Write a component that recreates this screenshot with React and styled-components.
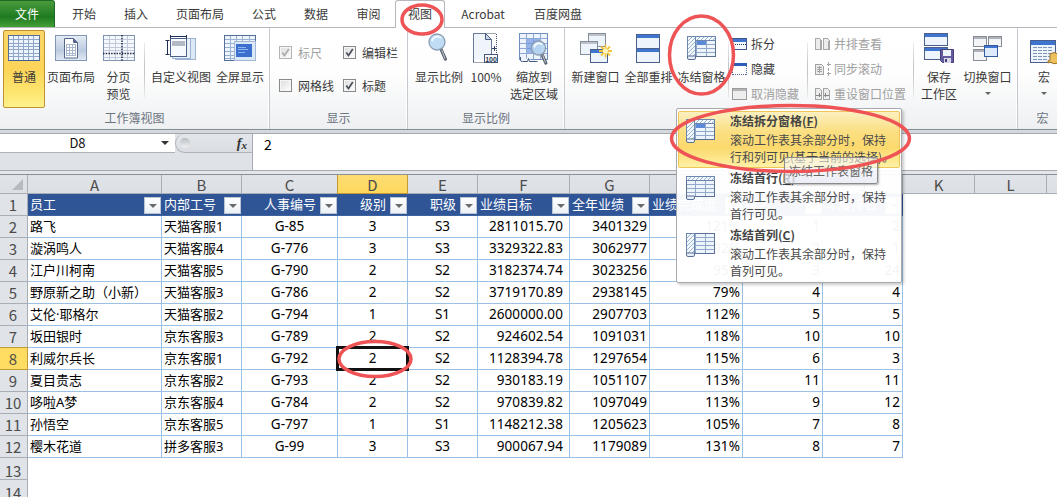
import React from "react";
import styled, { createGlobalStyle, css } from "styled-components";

const Global = createGlobalStyle`
  * { box-sizing: border-box; }
  html, body { margin: 0; background: #fff; overflow: hidden; }
  body { font-family: "Noto Sans CJK SC", "Noto Sans", sans-serif; font-size: 12px; color: #3a3a3a; }
`;

const Window = styled.div`
  position: relative;
  width: 1057px;
  height: 497px;
  overflow: hidden;
  display: flex;
  flex-direction: column;
  background: #fff;
  white-space: nowrap;
`;

/* ---------- tabs ---------- */
const TabBar = styled.div`
  display: flex;
  height: 28px;
  flex: none;
  border-bottom: 1px solid #b4b8bd;
`;
const FileTab = styled.div`
  width: 55px;
  height: 27px;
  margin-right: 3px;
  border-radius: 0 3px 0 0;
  border: 1px solid #1d6b22;
  border-left: none;
  border-bottom: none;
  background: linear-gradient(#4a9a3c, #2c8429 45%, #1f7a20 60%, #43a037);
  color: #fff;
  line-height: 25px;
  text-align: center;
`;
const Tab = styled.div`
  width: ${(p) => p.$w}px;
  height: 28px;
  line-height: 27px;
  text-align: center;
  ${(p) =>
    p.$active &&
    css`
      background: #fff;
      border: 1px solid #b4b8bd;
      border-bottom: none;
      border-radius: 3px 3px 0 0;
      line-height: 25px;
    `}
`;

/* ---------- ribbon ---------- */
const Ribbon = styled.div`
  display: flex;
  flex: none;
  height: 106px;
  border-bottom: 1px solid #a3a8af;
  background: linear-gradient(#fff 0, #fefefe 45px, #eef0f2 100px, #e8eaed 101px, #868c94 101px, #868c94 102px, #d5d9de 102px);
`;
const Group = styled.div`
  width: ${(p) => p.$w}px;
  height: 101px;
  flex: none;
  display: flex;
  flex-direction: column;
  border-right: 1px solid #c6cad0;
  box-shadow: inset -1px 0 #fff;
`;
const GroupBody = styled.div`
  display: flex;
  height: 80px;
  padding-left: ${(p) => p.$pl || 0}px;
`;
const GroupLabel = styled.div`
  height: 20px;
  line-height: 20px;
  text-align: center;
  color: #6c7480;
`;
const BigButton = styled.div`
  width: ${(p) => p.$w}px;
  height: 78px;
  margin-top: 2px;
  flex: none;
  display: flex;
  flex-direction: column;
  align-items: center;
  border-radius: 2px;
  border: 1px solid ${(p) => (p.$on ? "#bf922f" : "transparent")};
  background: ${(p) => (p.$on ? "linear-gradient(#fbd668, #fdd459 50%, #fee56f 80%, #fff08e)" : "none")};
`;
const IconBox = styled.div`
  height: 37px;
  flex: none;
  display: flex;
  align-items: flex-start;
`;
const BigText = styled.div`
  line-height: 17px;
  text-align: center;
`;
const DropArrow = styled.div`
  width: 0;
  height: 0;
  margin-top: 7px;
  border: 3px solid transparent;
  border-top-color: #666;
  border-bottom: none;
`;
const Divider = styled.div`
  width: 1px;
  height: 56px;
  margin: 14px ${(p) => p.$mr || 0}px 0 ${(p) => p.$ml || 0}px;
  flex: none;
  background: linear-gradient(#eee, #c3c7cc 40%, #c3c7cc 60%, #eee);
`;
const CheckGrid = styled.div`
  display: grid;
  grid-template-columns: 64px 66px;
  grid-template-rows: 33px 33px;
  padding: 8px 0 0 9px;
`;
const CheckLabel = styled.div`
  display: flex;
  align-items: center;
  gap: 6px;
  color: ${(p) => (p.$off ? "#a0a0a0" : "#3a3a3a")};
`;
const CheckBox = styled.div`
  width: 13px;
  height: 13px;
  border: 1px solid ${(p) => (p.$off ? "#b5b5b5" : "#8a8a8a")};
  background: linear-gradient(135deg, #dcdcdc, #fff);
  box-shadow: inset 0 0 0 1px #f6f6f6;
  svg { display: block; }
`;
const SmallStack = styled.div`
  width: ${(p) => p.$w}px;
  flex: none;
  display: flex;
  flex-direction: column;
  padding-top: 3px;
`;
const SmallButton = styled.div`
  height: 25px;
  display: flex;
  align-items: center;
  gap: 3px;
  color: ${(p) => (p.$off ? "#a0a0a0" : "#3a3a3a")};
`;

/* ---------- formula bar ---------- */
const FormulaBar = styled.div`
  display: flex;
  flex: none;
  height: 37px;
  background: #dfe2e7;
  border-bottom: 1px solid #a5aab2;
`;
const NameBox = styled.div`
  width: 175px;
  height: 19px;
  background: #fff;
  border-bottom: 1px solid #b0b4ba;
  display: flex;
  align-items: center;
  font: 13px/18px "Noto Sans CJK SC", sans-serif;
  color: #111;
`;
const NameText = styled.div`
  width: 155px;
  text-align: center;
`;
const NameArrow = styled.div`
  margin-left: 6px;
  border: 4px solid transparent;
  border-top-color: #333;
  border-bottom: none;
`;
const FxZone = styled.div`
  width: 77px;
  height: 19px;
  background: linear-gradient(#e3e6ea, #dadee3);
  border: 1px solid #b0b4ba;
  border-top: none;
  border-right: none;
  border-radius: 10px 0 0 10px;
  display: flex;
  align-items: center;
  justify-content: space-between;
  padding: 0 5px 0 4px;
`;
const Knob = styled.div`
  width: 10px;
  height: 10px;
  border-radius: 50%;
  background: linear-gradient(#b9bdc3, #f2f2f2);
`;
const Fx = styled.div`
  font: italic bold 14px/17px "Liberation Serif", serif;
  color: #333;
  sub { font-size: 11px; vertical-align: -1px; line-height: 0; }
`;
const FormulaInput = styled.div`
  flex: 1;
  height: 36px;
  background: #fff;
  border-left: 1px solid #a5aab2;
  padding-left: 11px;
  font: 14px/20px "Noto Sans CJK SC", sans-serif;
  color: #000;
`;

/* ---------- sheet ---------- */
const Sheet = styled.div`
  display: grid;
  flex: none;
  margin-top: 3px;
  border-top: 1px solid #8b9098;
  grid-template-columns: 28px 134px 80px 96px 70px 70px 92px 80px 93px 80px 80px 72px 72px 72px;
  grid-template-rows: 19px;
  grid-auto-rows: 22px;
`;
const SheetBack = styled.div`
  background: #e4e6ea;
  flex: none;
`;
const HeadCell = styled.div`
  background: ${(p) => (p.$on ? "linear-gradient(#fddc73, #ffd85c)" : "linear-gradient(#e0e3e7, #dcdfe4)")};
  border-right: 1px solid ${(p) => (p.$on ? "#c39a35" : "#a9aeb6")};
  border-bottom: 1px solid ${(p) => (p.$on ? "#c39a35" : "#a9aeb6")};
  box-shadow: ${(p) => (p.$on ? "-1px 0 #c39a35" : "none")};
  font-size: 15px;
  line-height: 19px;
  color: #4c4c4c;
  text-align: center;
`;
const RowHead = styled(HeadCell)`
  background: ${(p) => (p.$on ? "#ffdc62" : "#e0e3e8")};
  line-height: ${(p) => (p.$low ? 25 : 22)}px;
  padding-right: 1px;
  box-shadow: ${(p) => (p.$on ? "0 -1px #c39a35" : "none")};
  overflow: hidden;
`;
const Corner = styled(HeadCell)`
  display: flex;
  justify-content: flex-end;
  align-items: flex-end;
  padding: 0 4px 3px 0;
`;
const Cell = styled.div`
  background: #fff;
  border-right: 1px solid #9bc2e6;
  border-bottom: 1px solid #9bc2e6;
  color: #000;
  font-family: "Noto Sans", "Noto Sans CJK SC", sans-serif;
  font-size: ${(p) => p.$size}px;
  letter-spacing: ${(p) => p.$ls || 0}px;
  line-height: 21px;
  text-align: ${(p) => p.$align};
  padding: 0 ${(p) => p.$pr}px 0 ${(p) => p.$pl}px;
`;
const Blank = styled.div`
  background: #fff;
  grid-column: ${(p) => p.$from} / 15;
`;
const TitleCell = styled.div`
  position: relative;
  background: #2f5597;
  border-bottom: 1px solid #3d649f;
  color: #fff;
  font-size: 13px;
  line-height: 20px;
  text-align: ${(p) => p.$align};
  padding-left: ${(p) => (p.$align === "left" ? 2 : 0)}px;
`;
const Filter = styled.div`
  position: absolute;
  right: 1px;
  top: 3px;
  width: 17px;
  height: 17px;
  background: linear-gradient(#fff, #edf1f6);
  border: 1px solid #b9c5d5;
  display: flex;
  align-items: center;
  justify-content: center;
  &::after {
    content: "";
    border: 4px solid transparent;
    border-top: 4px solid #6b6b6b;
    border-bottom: none;
  }
`;

/* ---------- overlays ---------- */
const Selection = styled.div`
  position: absolute;
  left: 336px;
  top: 346px;
  width: 73px;
  height: 25px;
  border: 3px solid #111;
`;
const Menu = styled.div`
  position: absolute;
  left: 676px;
  top: 108px;
  width: 226px;
  height: 175px;
  padding: 2px 1px;
  border: 1px solid #a7abb0;
  border-radius: 2px;
  background: rgba(255, 255, 255, 0.955);
  box-shadow: 2px 2px 3px rgba(0, 0, 0, 0.2);
`;
const MenuItem = styled.div`
  display: flex;
  height: 57px;
  padding-left: 6px;
  border: 1px solid ${(p) => (p.$on ? "#f0c757" : "transparent")};
  border-radius: 2px;
  background: ${(p) => (p.$on ? "linear-gradient(#fcf0c0, #fbdf83 35%, #fcd96d 65%, #fff1a6)" : "none")};
`;
const MenuIcon = styled.div`
  width: 45px;
  padding-top: 6px;
  flex: none;
`;
const MenuTitle = styled.div`
  font-weight: bold;
  line-height: 17px;
  margin-bottom: 2px;
  color: #444;
`;
const MenuText = styled.div`
  line-height: 17px;
  color: #4a4a4a;
`;
const Tooltip = styled.div`
  position: absolute;
  left: 784px;
  top: 157px;
  width: 94px;
  height: 27px;
  border: 1px solid #8b8b8b;
  border-radius: 2px;
  background: linear-gradient(rgba(255, 255, 255, 0.55), rgba(232, 234, 244, 0.82));
  box-shadow: 1px 1px 2px rgba(0, 0, 0, 0.3);
  line-height: 25px;
  text-align: center;
  color: #666;
`;
const Marks = styled.svg`
  position: absolute;
  left: 0;
  top: 0;
  pointer-events: none;
`;

/* ---------- icons ---------- */
const Lines = ({ x, y, w, h, cols = [], rows = [], stroke = "#7f9cc4", fill = "#eef4fb", edge }) => (
  <g shapeRendering="crispEdges" fill="none" stroke={stroke}>
    <rect x={x + 0.5} y={y + 0.5} width={w - 1} height={h - 1} fill={fill} stroke={edge || stroke} />
    {cols.map((c) => <path key={"c" + c} d={`M${x + c + 0.5} ${y + 1}v${h - 2}`} />)}
    {rows.map((r) => <path key={"r" + r} d={`M${x + 1} ${y + r + 0.5}h${w - 2}`} />)}
  </g>
);
const Pane = ({ x, y, w, h, bar = "#3f74cf", edge = "#4a5f8c", fill = "#eef4fc", bh = 3 }) => (
  <g shapeRendering="crispEdges">
    <rect x={x + 0.5} y={y + 0.5} width={w - 1} height={h - 1} fill={fill} stroke={edge} />
    <rect x={x + 1} y={y + 1} width={w - 2} height={bh} fill={bar} />
  </g>
);
const Ico = ({ w = 34, h = 36, children }) => <svg width={w} height={h} viewBox={`0 0 ${w} ${h}`}>{children}</svg>;

const NormalIcon = () => (
  <Ico w={32}>
    <Lines x={0} y={4} w={32} h={26} cols={[5, 10, 15, 20, 25]} rows={[4, 8, 11, 14, 18, 21]} edge="#566f99" stroke="#8fa6c8" />
    <path d="M1 29.500h30" stroke="#3f5f92" />
  </Ico>
);
const LayoutIcon = () => (
  <Ico w={32}>
    <defs><linearGradient id="lg1" x2="0" y2="1"><stop stopColor="#e6ecf4" /><stop offset=".6" stopColor="#bccbe0" /><stop offset="1" stopColor="#e2eaf4" /></linearGradient></defs>
    <rect x=".5" y="4.500" width="31" height="25" fill="url(#lg1)" stroke="#8296b6" />
    <path d="M9.500 7.500h9l4 4v15.500h-13z" fill="#fff" stroke="#56698c" />
    <path d="M18.500 7.500v4h4z" fill="#56698c" stroke="#56698c" />
    <path d="M11.500 13.500h9M11.500 16.500h9M11.500 19.500h9M11.500 22.500h9M11.500 24.500h9M11.500 13v12M14.500 13v12M17.500 13v12M20.500 13v12" stroke="#a9b7cf" />
  </Ico>
);
const BreakIcon = () => (
  <Ico w={32}>
    <Lines x={0} y={4} w={32} h={26} cols={[6, 12, 24]} rows={[4, 8, 12, 15, 22]} edge="#8394b2" stroke="#c0c9d8" fill="#f4f7fb" />
    <path d="M19 4v26M0 22.500h32" stroke="#1d2c4a" strokeWidth="1.500" strokeDasharray="1.500 1.200" />
  </Ico>
);
const CustomIcon = () => (
  <Ico>
    <rect x="11.500" y="7.500" width="20" height="21" fill="#dce8f5" stroke="#9db4d3" />
    <rect x="8.500" y="7.500" width="18" height="20" fill="#e9f1fa" stroke="#9db4d3" />
    <rect x="6.500" y="7.500" width="16" height="18" fill="#f7faff" stroke="#4d628a" />
    <rect x="8" y="10" width="13" height="5" fill="#b3bac6" />
    <path d="M6.500 5.500h16M6.500 4v3.500M22.500 4v3.500M3.500 9.500v14M1.500 9.500h4M1.500 23.500h4" stroke="#1f2f52" />
  </Ico>
);
const FullIcon = () => (
  <Ico w={32}>
    <Lines x={0} y={4} w={32} h={26} cols={[6, 12, 18, 25]} rows={[4, 8, 12, 16, 20, 23]} edge="#566f99" stroke="#9ab1d3" />
    <rect x="10.500" y="10.500" width="21" height="19" fill="#dbe8f8" stroke="#a3b6d4" />
    <rect x="12" y="13" width="16" height="13" fill="#3d6fcf" />
    <path d="M14 16.500h8M14 18.500h10M14 21.500h7" stroke="#8fb6f2" />
  </Ico>
);
const Glass = ({ x, y, r = 8 }) => (
  <g>
    <path d={`M${x + r * 0.5} ${y + r * 0.9}L${x + r * 1.05} ${y + r * 2.150}`} stroke="#5b6270" strokeWidth="3.200" strokeLinecap="round" />
    <path d={`M${x + r * 0.6} ${y + r}L${x + r} ${y + r * 2.100}`} stroke="#c3c8d0" strokeWidth="1" />
    <circle cx={x} cy={y} r={r} fill="#b7d7f2" fillOpacity=".88" stroke="#8d9db3" strokeWidth="1.300" />
    <path d={`M${x - r * 0.6} ${y - r * 0.1}a${r * 0.65} ${r * 0.65} 0 0 1 ${r * 1.100} -${r * 0.4}`} fill="none" stroke="#f1f8ff" strokeWidth="2" />
  </g>
);
const ZoomIcon = () => <Ico w={22}><Glass x={9} y={11} r={8} /></Ico>;
const HundredIcon = () => (
  <Ico w={28}>
    <path d="M1.500 2.500h22.500M24.500 3v22M1.500 31.500h12M1.500 18v13" stroke="#3e4c69" strokeDasharray="1 1" />
    <path d="M1.500 2.500h12l6 6v15h-6v5h-12z" fill="#f0f5fb" stroke="none" />
    <path d="M1.500 30V2.500h12l6 6V23" fill="none" stroke="#657899" />
    <path d="M13.500 2.500v6h6z" fill="#c9d6e8" stroke="#4b5d80" />
    <path d="M20 17.500h5M22.500 15v5" stroke="#344464" />
    <rect x="12.500" y="23.500" width="13" height="8" fill="#fff" stroke="#44587f" />
    <text x="19" y="30.500" fontSize="7" fontWeight="bold" fontFamily="Liberation Sans, sans-serif" textAnchor="middle" fill="#253555">100</text>
  </Ico>
);
const ZoomSelIcon = () => (
  <Ico w={30}>
    <Lines x={0} y={2} w={29} h={27} cols={[7, 14, 21]} rows={[5, 10, 15, 20]} edge="#6f8fc1" stroke="#8ea9d4" />
    <rect x="8" y="8" width="13" height="14" fill="#6792df" opacity=".65" />
    <path d="M1.500 26v3.500q0 1 2 1h5l1-3 1 3h8" fill="#eef4fb" stroke="#44587f" />
    <Glass x={19.5} y={17} r={7} />
  </Ico>
);
const NewWinIcon = () => (
  <Ico>
    <Pane x={9} y={2} w={18} h={14} bar="#bcc1ca" edge="#858d9b" bh={2} />
    <Pane x={1} y={10} w={18} h={14} bar="#bcc1ca" edge="#858d9b" bh={2} />
    <Pane x={11} y={18} w={18} h={14} bh={3} />
    <path d="M26.500 13.500v13M20 20h13M22 15.500l9 9M31 15.500l-9 9" stroke="#f4c53c" strokeWidth="1.800" />
    <circle cx="26.500" cy="20" r="2.500" fill="#fff6c0" />
  </Ico>
);
const ArrangeIcon = () => (
  <Ico w={25}>
    <Pane x={0} y={3} w={24} h={15} />
    <Pane x={0} y={17} w={24} h={15} />
  </Ico>
);
const FreezeIcon = ({ top = true, left = true, mark = true, id }) => (
  <svg width="31" height="28" viewBox="0 0 31 28">
    <defs>
      <pattern id={id} width="4" height="4" patternUnits="userSpaceOnUse">
        <rect width="4" height="4" fill="#f3f8fd" />
        <path d="M-1 1l2-2M0 4l4-4M3 5l2-2" stroke="#8fabce" strokeWidth=".9" />
      </pattern>
    </defs>
    <Lines x={1} y={1} w={29} h={21} cols={[9, 19]} rows={[4, 8, 12, 16]} stroke="#91a8c9" edge="#5c7096" />
    {top && <rect x="1.500" y="1.500" width="28" height="4" fill={`url(#${id})`} stroke="#6e87ae" />}
    {left && <rect x="1.500" y="1.500" width="8" height="20" fill={`url(#${id})`} stroke="#6e87ae" />}
    {mark && <rect x="11" y="6" width="9" height="4" fill="#5b8ad8" />}
    <path d="M1.500 21v2q0 1.500 1.500 1.500h5q1.500 0 1.500-1.500v-2z" fill="#e6f0fa" stroke="#5c7096" />
  </svg>
);
const SaveWsIcon = () => (
  <Ico w={32}>
    <Pane x={1} y={2} w={24} h={13} />
    <Pane x={1} y={16} w={24} h={13} />
    <path d="M17.500 18.500h13v13h-11l-2-2z" fill="#655b9f" stroke="#473f7c" />
    <path d="M20 19h8v6h-8z" fill="#eef2fb" /><path d="M21 27h7v5h-7z" fill="#dadbe9" /><path d="M22 28h2v3h-2z" fill="#473f7c" />
  </Ico>
);
const SwitchIcon = () => (
  <Ico w={30}>
    <Pane x={0} y={5} w={14} h={11} bar="#aeb2ba" edge="#878c95" bh={2} fill="#f4f5f7" />
    <Pane x={15} y={5} w={14} h={11} bar="#aeb2ba" edge="#878c95" bh={2} fill="#f4f5f7" />
    <Pane x={0} y={18} w={14} h={12} bar="#aeb2ba" edge="#878c95" bh={2} fill="#f4f5f7" />
    <Pane x={11} y={14} w={14} h={12} bar="#3f74cf" edge="#335a9f" fill="#dceafb" bh={2} />
  </Ico>
);
const MacroIcon = () => (
  <Ico w={28}>
    <Pane x={0} y={9} w={26} h={23} bh={4} />
    <path d="M3 16.500h20M3 19.500h20M3 22.500h20M3 25.500h20M3 28.500h14" stroke="#7f95ba" strokeDasharray="4 1" />
    <path d="M20 23q4-3 8 0v9q-4 2-8-1l-2 1q-1-3 2-3z" fill="#eec15c" stroke="#99722a" />
  </Ico>
);
const SmallWin = ({ kind }) => (
  <svg width="16" height="14" viewBox="0 0 16 14">
    <g shapeRendering="crispEdges">
      {kind === "split" && <><rect x=".5" y="1.500" width="14" height="11" fill="#f4f8fd" stroke="#40598a" /><path d="M1 3h13" stroke="#3f74cf" strokeWidth="3" /><path d="M1 7.500h14" stroke="#26395f" strokeDasharray="1 1" /></>}
      {kind === "hide" && <><path d="M.5 2v11M14.500 2v11M1 12.500h14" stroke="#54678f" strokeDasharray="1 1" /><path d="M0 2.500h15" stroke="#2c5cb5" strokeWidth="3" /></>}
      {kind === "unhide" && <><rect x=".5" y="1.500" width="14" height="11" fill="#eee" stroke="#9c9c9c" /><path d="M1 3h13" stroke="#b4b4b4" strokeWidth="2" /></>}
      {kind === "side" && <g fill="#ececec" stroke="#a8a8a8"><path d="M.5 1.500h4l2 2v9h-6zM8.500 1.500h4l2 2v9h-6z" /><path d="M6 3v10M14 4v9" strokeWidth="2" /></g>}
      {kind === "sync" && <g fill="#ececec" stroke="#a3a3a3"><path d="M.5 2.500h6l2 2v8h-8zM2 5.500h5M2 7.500h5M2 9.500h5M4.500 4v7" /><path d="M13.500 0v4M13.500 5.500v3M13.500 10v4M11.500 2.500h4M11.500 11.500h4" /></g>}
      {kind === "reset" && <g fill="#ececec" stroke="#a3a3a3"><path d="M.5 1.500h4l2 2v9h-6zM8.500 1.500h4l2 2v9h-6z" /><path d="M1 8h5M4.500 6v4M9 8h5M10.500 6v4" stroke="#858585" /></g>}
    </g>
  </svg>
);
const Tick = ({ off }) => (
  <svg width="11" height="11" viewBox="0 0 11 11"><path d="M2.300 5.500l2.200 3L8.800 2" fill="none" stroke={off ? "#a9a9a9" : "#4a505b"} strokeWidth="1.700" /></svg>
);

/* ---------- data ---------- */
const tabs = [["开始", 52], ["插入", 52], ["页面布局", 76], ["公式", 52], ["数据", 52], ["审阅", 53], ["视图", 50, true], ["Acrobat", 76], ["百度网盘", 74]];
const letters = "ABCDEFGHIJKL".split("");
const titles = [["员工", "left"], ["内部工号", "left"], ["人事编号", "center"], ["级别", "center"], ["职级", "center"], ["业绩目标", "left"], ["全年业绩", "left"], ["业绩完成度", "left"], ["排名", "left"], ["年度排名", "left"]];
const rows = [
  ["路飞", "天猫客服1", "G-85", "3", "S3", "2811015.70", "3401329", "121%", "1", "2"],
  ["漩涡鸣人", "天猫客服4", "G-776", "3", "S3", "3329322.83", "3062977", "92%", "2", "1"],
  ["江户川柯南", "天猫客服5", "G-790", "2", "S2", "3182374.74", "3023256", "95%", "3", "24"],
  ["野原新之助（小新）", "天猫客服3", "G-786", "2", "S2", "3719170.89", "2938145", "79%", "4", "4"],
  ["艾伦·耶格尔", "天猫客服2", "G-794", "1", "S1", "2600000.00", "2907703", "112%", "5", "5"],
  ["坂田银时", "京东客服3", "G-789", "2", "S2", "924602.54", "1091031", "118%", "10", "10"],
  ["利威尔兵长", "京东客服1", "G-792", "2", "S2", "1128394.78", "1297654", "115%", "6", "3"],
  ["夏目贵志", "京东客服2", "G-793", "2", "S2", "930183.19", "1051107", "113%", "11", "11"],
  ["哆啦A梦", "京东客服4", "G-784", "2", "S2", "970839.82", "1097049", "113%", "9", "12"],
  ["孙悟空", "京东客服5", "G-797", "1", "S1", "1148212.38", "1205623", "105%", "7", "8"],
  ["樱木花道", "拼多客服3", "G-99", "3", "S3", "900067.94", "1179089", "131%", "8", "7"],
];
const columnStyle = (i) => {
  if (i < 2) return { $size: 13, $align: "left", $pl: 2, $pr: 0 };
  if (i < 5) return { $size: 13.5, $align: "center", $pl: 0, $pr: 0 };
  return { $size: 13.5, $align: "right", $pl: 0, $pr: i === 5 ? 6 : 2, $ls: 0.1 };
};

const Big = ({ w, on, icon, lines, arrow }) => (
  <BigButton $w={w} $on={on}>
    <IconBox>{icon}</IconBox>
    {lines.map((l) => <BigText key={l}>{l}</BigText>)}
    {arrow && <DropArrow />}
  </BigButton>
);
const Check = ({ on, off, children }) => (
  <CheckLabel $off={off}><CheckBox $off={off}>{on && <Tick off={off} />}</CheckBox>{children}</CheckLabel>
);

export default function App() {
  return (
    <Window>
      <Global />
      <TabBar>
        <FileTab>文件</FileTab>
        {tabs.map(([t, w, a]) => <Tab key={t} $w={w} $active={a}>{t}</Tab>)}
      </TabBar>
      <Ribbon>
        <Group $w={270}>
          <GroupBody $pl={3}>
            <Big w={42} on icon={<NormalIcon />} lines={["普通"]} />
            <Big w={52} icon={<LayoutIcon />} lines={["页面布局"]} />
            <Big w={43} icon={<BreakIcon />} lines={["分页", "预览"]} />
            <Divider $ml={4} $mr={5} />
            <Big w={62} icon={<CustomIcon />} lines={["自定义视图"]} />
            <Big w={56} icon={<FullIcon />} lines={["全屏显示"]} />
          </GroupBody>
          <GroupLabel>工作簿视图</GroupLabel>
        </Group>
        <Group $w={138}>
          <GroupBody>
            <CheckGrid>
              <Check on off>标尺</Check>
              <Check on>编辑栏</Check>
              <Check>网格线</Check>
              <Check on>标题</Check>
            </CheckGrid>
          </GroupBody>
          <GroupLabel>显示</GroupLabel>
        </Group>
        <Group $w={157}>
          <GroupBody $pl={4}>
            <Big w={54} icon={<ZoomIcon />} lines={["显示比例"]} />
            <Big w={40} icon={<HundredIcon />} lines={["100%"]} />
            <Big w={56} icon={<ZoomSelIcon />} lines={["缩放到", "选定区域"]} />
          </GroupBody>
          <GroupLabel>显示比例</GroupLabel>
        </Group>
        <Group $w={453}>
          <GroupBody $pl={4}>
            <Big w={53} icon={<NewWinIcon />} lines={["新建窗口"]} />
            <Big w={53} icon={<ArrangeIcon />} lines={["全部重排"]} />
            <Big w={53} icon={<Ico w={31}><g transform="translate(0 4)"><FreezeIcon id="fz0" /></g></Ico>} lines={["冻结窗格"]} />
            <Divider $mr={3} $ml={0} />
            <SmallStack $w={75}>
              <SmallButton><SmallWin kind="split" />拆分</SmallButton>
              <SmallButton><SmallWin kind="hide" />隐藏</SmallButton>
              <SmallButton $off><SmallWin kind="unhide" />取消隐藏</SmallButton>
            </SmallStack>
            <Divider $mr={7} />
            <SmallStack $w={98}>
              <SmallButton $off><SmallWin kind="side" />并排查看</SmallButton>
              <SmallButton $off><SmallWin kind="sync" />同步滚动</SmallButton>
              <SmallButton $off><SmallWin kind="reset" />重设窗口位置</SmallButton>
            </SmallStack>
            <Divider $mr={2} />
            <Big w={46} icon={<SaveWsIcon />} lines={["保存", "工作区"]} />
            <Big w={51} icon={<SwitchIcon />} lines={["切换窗口"]} arrow />
          </GroupBody>
          <GroupLabel />
        </Group>
        <Group $w={50}>
          <GroupBody $pl={1}>
            <Big w={50} icon={<MacroIcon />} lines={["宏"]} arrow />
          </GroupBody>
          <GroupLabel>宏</GroupLabel>
        </Group>
      </Ribbon>

      <FormulaBar>
        <NameBox><NameText>D8</NameText><NameArrow /></NameBox>
        <FxZone><Knob /><Fx>f<sub>x</sub></Fx></FxZone>
        <FormulaInput>2</FormulaInput>
      </FormulaBar>

      <SheetBack>
        <Sheet>
          <Corner><svg width="11" height="11"><path d="M11 0v11H0z" fill="#b6bac0" /></svg></Corner>
          {letters.map((l) => <HeadCell key={l} $on={l === "D"}>{l}</HeadCell>)}
          <HeadCell />
          <RowHead>1</RowHead>
          {titles.map(([t, a]) => <TitleCell key={t} $align={a}>{t}<Filter /></TitleCell>)}
          <Blank $from={12} />
          {rows.map((r, n) => (
            <React.Fragment key={n}>
              <RowHead $on={n === 6}>{n + 2}</RowHead>
              {r.map((v, i) => <Cell key={i} {...columnStyle(i)}>{v}</Cell>)}
              <Blank $from={12} />
            </React.Fragment>
          ))}
          <RowHead $low>13</RowHead>
          <Blank $from={2} />
          <RowHead $low>14</RowHead>
          <Blank $from={2} />
        </Sheet>
      </SheetBack>

      <Selection />
      <Menu>
        <MenuItem $on>
          <MenuIcon><FreezeIcon id="fz1" /></MenuIcon>
          <div>
            <MenuTitle>冻结拆分窗格(<u>F</u>)</MenuTitle>
            <MenuText>滚动工作表其余部分时，保持</MenuText>
            <MenuText>行和列可见(基于当前的选择)。</MenuText>
          </div>
        </MenuItem>
        <MenuItem>
          <MenuIcon><FreezeIcon id="fz2" left={false} mark={false} /></MenuIcon>
          <div>
            <MenuTitle>冻结首行(<u>R</u>)</MenuTitle>
            <MenuText>滚动工作表其余部分时，保持</MenuText>
            <MenuText>首行可见。</MenuText>
          </div>
        </MenuItem>
        <MenuItem>
          <MenuIcon><FreezeIcon id="fz3" top={false} mark={false} /></MenuIcon>
          <div>
            <MenuTitle>冻结首列(<u>C</u>)</MenuTitle>
            <MenuText>滚动工作表其余部分时，保持</MenuText>
            <MenuText>首列可见。</MenuText>
          </div>
        </MenuItem>
      </Menu>
      <Tooltip>冻结工作表窗格</Tooltip>
      <Marks width="1057" height="497" fill="none" stroke="#ee5456" strokeWidth="3.500">
        <ellipse cx="422" cy="19.500" rx="20" ry="14.500" />
        <ellipse cx="701.500" cy="55" rx="32" ry="39" />
        <ellipse cx="790.500" cy="138.500" rx="119" ry="33" />
        <ellipse cx="375" cy="359" rx="36" ry="17.500" />
      </Marks>
    </Window>
  );
}
